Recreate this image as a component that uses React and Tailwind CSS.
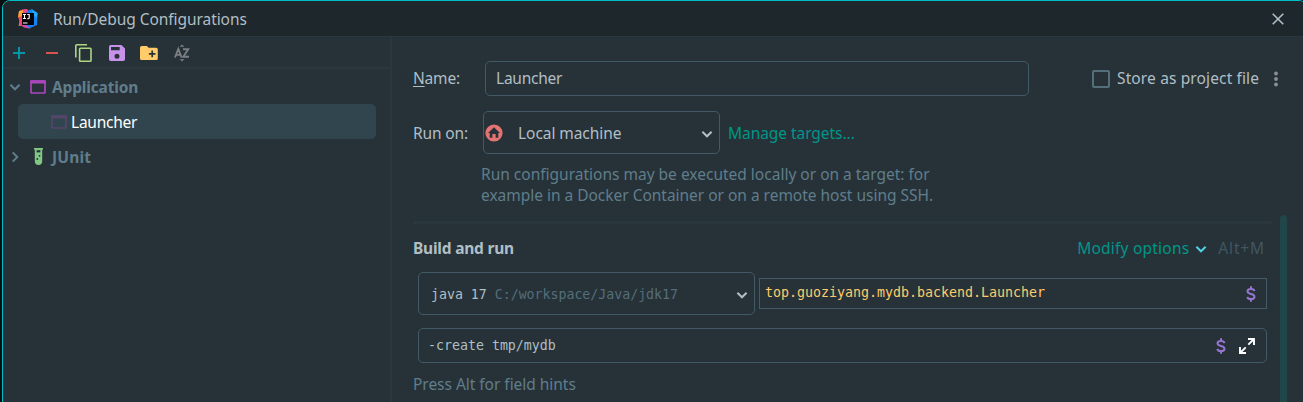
const UI = "font-['Noto_Sans',sans-serif] whitespace-nowrap";
const MONO = "font-['DejaVu_Sans_Mono',monospace] whitespace-pre text-[13.28px]";

function Logo() {
  return (
    <svg width="20" height="20" viewBox="0 0 20 20" className="shrink-0">
      <path d="M1 2 L7 0.5 L10 4 L6 16 L0.5 17 L2 11 L0 8 Z" fill="#fb8a2e" />
      <path d="M0.5 8 L4 5 L5 15 L2 16 Z" fill="#f7456b" />
      <path d="M4 0.5 L9 0 L12 4 L5 6 Z" fill="#f0468c" />
      <path d="M1 2 L5 1 L5 7 L0.500 8 Z" fill="#fda13c" />
      <path d="M9 2 L14 0 L19.5 4 L19 16 L11 19.5 L4 17 Z" fill="#1683f3" />
      <path d="M14 1 L19.5 4 L19 9 L15 6 Z" fill="#25aaf8" />
      <path d="M1 15 L6 14 L12 19.5 L6 18.5 Z" fill="#d747a8" />
      <rect x="4" y="4" width="12" height="12" fill="#060309" />
      <path d="M5 5.5h3M6.5 5.5v4M5 9.5h3M9.3 5.5h2.4M11.2 5.5v3.2q0 1-1 1H9.2M5 14h4.5" stroke="#fff" strokeWidth="1.1" fill="none" />
    </svg>
  );
}

function Plus() {
  return (
    <svg width="12" height="12" viewBox="0 0 12 12" className="shrink-0">
      <path d="M6 0V12M0 6H12" stroke="#0097a7" strokeWidth="2" />
    </svg>
  );
}

function Minus() {
  return (
    <svg width="12" height="12" viewBox="0 0 12 12" className="shrink-0">
      <path d="M0 6H12" stroke="#d9534f" strokeWidth="2" />
    </svg>
  );
}

function Copy() {
  return (
    <svg width="17" height="18" viewBox="0 0 17 18" className="shrink-0">
      <path d="M12 0.8H1.8Q0.8 0.8 0.8 1.8V13.500" fill="none" stroke="#aed581" strokeWidth="1.6" />
      <rect x="4.6" y="4.3" width="11.4" height="12.9" rx="0.8" fill="none" stroke="#aed581" strokeWidth="1.6" />
    </svg>
  );
}

function Save() {
  return (
    <svg width="16" height="16" viewBox="0 0 16 16" className="shrink-0">
      <path fillRule="evenodd" d="M1.8 0H12.4L16 3.6V14.2Q16 16 14.2 16H1.800Q0 16 0 14.200V1.800Q0 0 1.800 0Z M2 2V5.300H10.700V2Z M8 8.700A2.500 2.500 0 1 0 8 13.700A2.500 2.500 0 1 0 8 8.700Z" fill="#c792ea" />
    </svg>
  );
}

function FolderPlus() {
  return (
    <svg width="18" height="14" viewBox="0 0 18 14" className="shrink-0">
      <path d="M1.7 0H6.8L8.600 1.800H16.200Q17.800 1.800 17.800 3.400V12.400Q17.800 14 16.200 14H1.700Q0 14 0 12.400V1.700Q0 0 1.700 0Z" fill="#ffcb6b" />
      <path d="M12.200 4.600V11.200M8.900 7.900H15.500" stroke="#263238" strokeWidth="1.7" />
    </svg>
  );
}

function SortAZ() {
  return (
    <svg width="16" height="18" viewBox="0 0 16 18" className="shrink-0">
      <path d="M5.600 2.800L8 0.400L10.400 2.800Z M5.600 15.200L8 17.600L10.400 15.200Z" fill="#7b7f82" />
      <path d="M1 13.500L4.300 4.900L7.600 13.500M2.200 10.900H6.400M9 5.200H14.300L9.300 12.700H15" fill="none" stroke="#7b7f82" strokeWidth="1.9" />
    </svg>
  );
}

function AppIcon({ color }) {
  return (
    <svg width="16" height="14" viewBox="0 0 16 14" className="shrink-0">
      <rect x="1" y="1" width="14" height="12" rx="0.6" fill="none" stroke={color} strokeWidth="1.7" />
      <rect x="0.2" y="0.2" width="15.600" height="3.300" rx="0.8" fill={color} />
    </svg>
  );
}

function TestTube() {
  return (
    <svg width="9" height="17" viewBox="0 0 9 17" className="shrink-0">
      <path d="M0 0H9V1.600H8.200V13.200A3.700 3.700 0 0 1 0.800 13.200V1.600H0Z" fill="#81c784" />
      <rect x="2.600" y="2.200" width="3.800" height="2.200" fill="#263238" />
      <circle cx="5.500" cy="7.800" r="0.900" fill="#263238" />
      <circle cx="3.300" cy="11" r="0.900" fill="#263238" />
    </svg>
  );
}

function Chevron({ color }) {
  return (
    <svg width="12" height="8" viewBox="0 0 12 8" className="shrink-0">
      <path d="M1.4 1.700 L6 6.300 L10.6 1.700" fill="none" stroke={color} strokeWidth="2" />
    </svg>
  );
}

function Home() {
  return (
    <svg width="18" height="18" viewBox="0 0 18 18" className="shrink-0">
      <circle cx="9" cy="9" r="8.600" fill="#e57373" />
      <path d="M9 3.200L15 9H13.300V13.800H10.600V9.900H7.400V13.800H4.700V9H3Z" fill="#263238" />
    </svg>
  );
}

function Dollar() {
  return (
    <svg width="10" height="16" viewBox="0 0 10 16" className="shrink-0">
      <path
        d="M8.4 5.200C8.200 3.700 7 2.900 5 2.900C2.900 2.900 1.500 3.800 1.500 5.300C1.500 7 3 7.500 5 8C7.100 8.500 8.500 9.100 8.500 10.700C8.500 12.300 7.100 13.100 5 13.100C2.900 13.100 1.600 12.300 1.400 10.800M5 0.300V3M5 13V15.700"
        fill="none"
        stroke="#9575cd"
        strokeWidth="2"
      />
    </svg>
  );
}

function Expand() {
  return (
    <svg width="16" height="16" viewBox="0 0 16 16" className="shrink-0">
      <path d="M9 1H15V7M15 1L9.300 6.700M7 15H1V9M1 15L6.700 9.300" fill="none" stroke="#fff" strokeWidth="1.900" />
    </svg>
  );
}

function Sidebar() {
  return (
    <aside className="flex w-[389px] shrink-0 flex-col border-r-2 border-[#2a373e]">
      <div className="flex h-8 items-center border-b-2 border-[#2a373e] pl-[10px] pt-px">
        <Plus />
        <span className="w-[21px]" />
        <Minus />
        <span className="w-[17px]" />
        <Copy />
        <span className="w-[17px]" />
        <Save />
        <span className="w-[15px]" />
        <FolderPlus />
        <span className="w-4" />
        <SortAZ />
      </div>
      <div className="flex h-[35px] items-center pl-[6px] font-bold text-[#607d8b]">
        <Chevron color="#607d8b" />
        <span className="ml-[9px] mr-[6px]"><AppIcon color="#ab47bc" /></span>
        <span className="pt-px tracking-[-0.16px]">Application</span>
      </div>
      <div className="ml-[15px] mr-[14px] flex h-[35px] items-center rounded-[5px] bg-[#31454e] pl-[33px] text-white">
        <span className="mr-1"><AppIcon color="#54456b" /></span>
        <span className="pt-[2px] tracking-[-0.24px]">Launcher</span>
      </div>
      <div className="flex h-[35px] items-center pl-[6px] font-bold text-[#607d8b]">
        <span className="-rotate-90"><Chevron color="#607d8b" /></span>
        <span className="ml-[13px] mr-[9px]"><TestTube /></span>
        <span className="pt-[2px] tracking-[0.2px]">JUnit</span>
      </div>
    </aside>
  );
}

function BuildAndRun() {
  return (
    <section className="mt-[9px] flex flex-1 gap-2">
      <div className="w-[859px] pt-[6px]">
        <div className="h-[3px] bg-[#2a373e]" />
        <div className="mt-[14px] flex h-[21px] items-center justify-between pr-[7px]">
          <h2 className="font-bold tracking-[-0.22px]">Build and run</h2>
          <div className="flex items-center">
            <span className="tracking-[0.21px] text-[#009688]">Modify options</span>
            <span className="ml-[6px] mr-[11px]"><Chevron color="#4dd0e1" /></span>
            <span className="tracking-[0.85px] text-[#415660]">Alt+M</span>
          </div>
        </div>
        <div className="mt-[13px] flex items-center pl-[5px]">
          <div className={`flex h-[43px] w-[337px] items-center justify-between rounded-[5px] border border-[#415a66] pl-3 pr-[6px] ${MONO}`}>
            <span className="pt-[2px] tracking-[-0.02px]">java 17 <span className="text-[#546e7a]">C:/workspace/Java/jdk17</span></span>
            <span className="pt-[2px]"><Chevron color="#b0bec5" /></span>
          </div>
          <div className={`ml-1 flex h-[31px] w-[508px] items-center justify-between border border-[#415a66] pl-[5px] pr-[10px] text-[#ffcb6b] ${MONO}`}>
            <span className="pb-[3px] tracking-[0.01px]">top.guoziyang.mydb.backend.Launcher</span>
            <Dollar />
          </div>
        </div>
        <div className={`ml-[5px] mt-[13px] flex h-[35px] w-[849px] items-center rounded-[5px] border border-[#415a66] pl-[9px] pr-[11px] ${MONO}`}>
          <span className="flex-1">-create tmp/mydb</span>
          <Dollar />
          <span className="ml-[13px]"><Expand /></span>
        </div>
        <p className="mt-[11px] tracking-[-0.03px] text-[#607d8b]">Press Alt for field hints</p>
      </div>
      <div className="w-[7px] rounded-t-full bg-[#20464a]" />
    </section>
  );
}

export default function App() {
  return (
    <div className={`flex h-[402px] w-[1303px] overflow-hidden bg-[#0b0f11] pl-0.5 text-[15.5px] leading-[21px] text-[#b0bec5] ${UI}`}>
      <div className="flex h-[412px] w-[1305px] shrink-0 flex-col overflow-hidden rounded-t-lg border border-[#00bcc4] bg-[#263238]">
        <header className="flex h-9 shrink-0 items-center justify-between border-b border-[#2a373e] bg-[#1e272c] pl-[15px] pr-[22px]">
          <div className="flex items-center gap-[15px]">
            <Logo />
            <h1 className="pt-px tracking-[-0.06px]">Run/Debug Configurations</h1>
          </div>
          <svg width="12" height="12" viewBox="0 0 12 12">
            <path d="M0.700 0.700 L11.300 11.300 M11.300 0.700 L0.700 11.300" stroke="#b0bec5" strokeWidth="1.600" />
          </svg>
        </header>
        <div className="flex flex-1">
          <Sidebar />
          <main className="flex flex-1 flex-col pl-[21px] pt-6">
            <div className="flex h-[35px] items-center">
              <label className="w-[72px] tracking-[-0.2px]"><span className="underline underline-offset-2">N</span>ame:</label>
              <div className="flex h-[35px] w-[544px] items-center rounded-[5px] border border-[#415a66] pl-[10px] tracking-[-0.24px]">Launcher</div>
              <span className="ml-[63px] h-[18px] w-[18px] rounded-[2px] border-2 border-[#546e7a]" />
              <span className="ml-[7px] tracking-[0.13px]">Store as project file</span>
              <svg width="4" height="16" viewBox="0 0 4 16" className="ml-[15px]">
                <g fill="#8a8f93"><circle cx="2" cy="2.500" r="1.900" /><circle cx="2" cy="8" r="1.900" /><circle cx="2" cy="13.500" r="1.900" /></g>
              </svg>
            </div>
            <div className="mt-[15px] flex h-[43px] items-center">
              <label className="w-[70px] pt-[2px] tracking-[-0.14px]">Run on:</label>
              <div className="flex h-[43px] w-[237px] items-center rounded-[5px] border border-[#415a66] pl-px pr-[6px]">
                <Home />
                <span className="ml-[15px] flex-1 pt-[2px] tracking-[-0.06px]">Local machine</span>
                <span className="pt-[2px]"><Chevron color="#b0bec5" /></span>
              </div>
              <span className="ml-2 pt-[2px] tracking-[-0.05px] text-[#009688]">Manage targets...</span>
            </div>
            <p className="ml-[68px] mt-[10px] text-[#607d8b]">
              Run configurations may be executed locally or on a target: for
              <br />
              <span className="tracking-[-0.02px]">example in a Docker Container or on a remote host using SSH.</span>
            </p>
            <BuildAndRun />
          </main>
        </div>
      </div>
    </div>
  );
}
